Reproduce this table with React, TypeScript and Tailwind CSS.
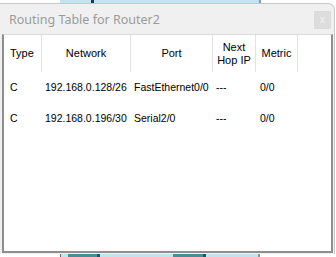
import React from 'react';

type Route = {
  type: string;
  network: string;
  port: string;
  nextHop: string;
  metric: string;
};

const ROUTES: Route[] = [
  { type: 'C', network: '192.168.0.128/26', port: 'FastEthernet0/0', nextHop: '---', metric: '0/0' },
  { type: 'C', network: '192.168.0.196/30', port: 'Serial2/0', nextHop: '---', metric: '0/0' },
];

// column widths, in px, left to right
const COLS = ['w-[38px]', 'w-[89px]', 'w-[82px]', 'w-[43px]', 'w-[42px]'];

export default function App() {
  return (
    <div className="w-[336px] h-[257px] bg-white overflow-hidden flex flex-col font-['Liberation_Sans',Arial,sans-serif]">
      {/* workspace device peeking above the dialog */}
      <div className="h-[3px] flex shrink-0">
        <div className="w-[60px]" />
        <div className="w-[31px] bg-[#bfe6f0]" />
        <div className="w-[3px] bg-[#1d3b44]" />
        <div className="w-[165px] bg-[#bfe6f0]" />
        <div className="w-[2px] bg-[#8a9aa0]" />
      </div>

      {/* dialog */}
      <div className="w-[335px] h-[251px] shrink-0 bg-[#f0f0f0] rounded-tr-[7px] border-r border-t border-[#c8c8c8] flex flex-col">
        <div className="h-[30px] shrink-0 flex items-center justify-between pl-[9px] pr-[3px]">
          <span className="text-[12.5px] text-[#9b9b9b] font-['Noto_Sans',sans-serif] leading-none pt-[2px]">
            Routing Table for Router2
          </span>
          <div className="w-[17px] h-[18px] bg-[#dcdcdc] flex items-center justify-center text-[10px] text-[#f4f4f4] leading-none mt-[2px]">
            x
          </div>
        </div>

        <div className="flex-1 ml-[2px] mr-[1px] mb-[1px] bg-white border-l-2 border-b-2 border-r-2 border-t border-l-[#8e8e8e] border-b-[#8e8e8e] border-r-[#8e8e8e] border-t-[#dadada] text-[10.5px] text-black">
          {/* header */}
          <div className="flex h-[37px] text-[11px]">
            {['Type', 'Network', 'Port', 'Next Hop IP', 'Metric'].map((h, i) => (
              <div
                key={h}
                className={`${COLS[i]} border-r border-[#e3e3e3] flex items-center ${i === 0 ? 'justify-start pl-[6px]' : 'justify-center text-center'} leading-[13px]`}
              >
                {h === 'Next Hop IP' ? (
                  <span>
                    Next
                    <br />
                    Hop IP
                  </span>
                ) : (
                  h
                )}
              </div>
            ))}
          </div>

          {/* rows */}
          <div className="flex flex-col">
            {ROUTES.map((r) => (
              <div key={r.network} className="flex h-[31px] items-center">
                <div className={`${COLS[0]} pl-[6px]`}>{r.type}</div>
                <div className={`${COLS[1]} pl-[3px]`}>{r.network}</div>
                <div className={`${COLS[2]} pl-[3px]`}>{r.port}</div>
                <div className={`${COLS[3]} pl-[3px]`}>{r.nextHop}</div>
                <div className={`${COLS[4]} pl-[4px]`}>{r.metric}</div>
              </div>
            ))}
          </div>
        </div>
      </div>

      {/* workspace link strip below the dialog */}
      <div className="h-[3px] flex shrink-0">
        <div className="w-[60px]" />
        <div className="w-[1px] bg-[#55656c]" />
        <div className="w-[7px] bg-[#bfe6f0]" />
        <div className="w-[29px] bg-[#4d8b99]" />
        <div className="w-[3px] bg-[#1d5866]" />
        <div className="w-[73px] bg-[#bfe6f0]" />
        <div className="w-[30px] bg-[#4d8b99]" />
        <div className="w-[3px] bg-[#1d5866]" />
        <div className="w-[52px] bg-[#bfe6f0]" />
        <div className="w-[2px] bg-[#8a9aa0]" />
      </div>
    </div>
  );
}
